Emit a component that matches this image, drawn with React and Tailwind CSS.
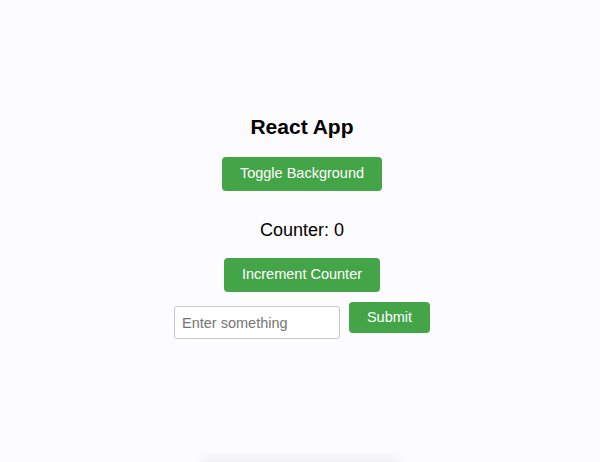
import { useState } from 'react';

export default function App() {
    const [dark, setDark] = useState(false);
    const [count, setCount] = useState(0);
    const [text, setText] = useState('');

    return (
        <div
            className={`relative h-[462px] w-full overflow-hidden ${dark ? 'bg-gray-800 text-white' : 'bg-[#fcfbfd] text-black'}`}
            style={{ fontFamily: '"Liberation Sans", Arial, sans-serif' }}
        >
            <div className="flex flex-col items-center pt-[115px] pl-[4px]">
                {/* Title */}
                <h1 className="text-[21px] leading-[24px] font-bold">React App</h1>

                <button
                    onClick={() => setDark(!dark)}
                    className="mt-[18px] h-[34px] w-[160px] rounded-[4px] bg-[#44a448] text-[14.5px] text-white"
                >
                    Toggle Background
                </button>

                <p className="mt-[27px] text-[18px] leading-[24px]">Counter: {count}</p>

                <button
                    onClick={() => setCount(count + 1)}
                    className="mt-[16px] h-[34px] w-[156px] rounded-[4px] bg-[#44a448] text-[14.5px] text-white"
                >
                    Increment Counter
                </button>

                {/* Form */}
                <form
                    onSubmit={(e) => e.preventDefault()}
                    className="mt-[10px] flex items-start gap-[9px]"
                >
                    <input
                        value={text}
                        onChange={(e) => setText(e.target.value)}
                        placeholder="Enter something"
                        className="mt-[4px] h-[33px] w-[166px] rounded-[3px] border border-[#c8c8c8] bg-white px-[7px] text-[14.5px] text-black placeholder:text-[#757575] outline-none"
                    />
                    <button
                        type="submit"
                        className="h-[31px] w-[81px] rounded-[4px] bg-[#44a448] text-[14.5px] text-white"
                    >
                        Submit
                    </button>
                </form>
            </div>

            {/* faint shadow at the bottom edge */}
            <div className="absolute bottom-[-8px] left-1/2 h-[12px] w-[200px] -translate-x-1/2 rounded-full bg-black/5 blur-[4px]"></div>
        </div>
    );
}
